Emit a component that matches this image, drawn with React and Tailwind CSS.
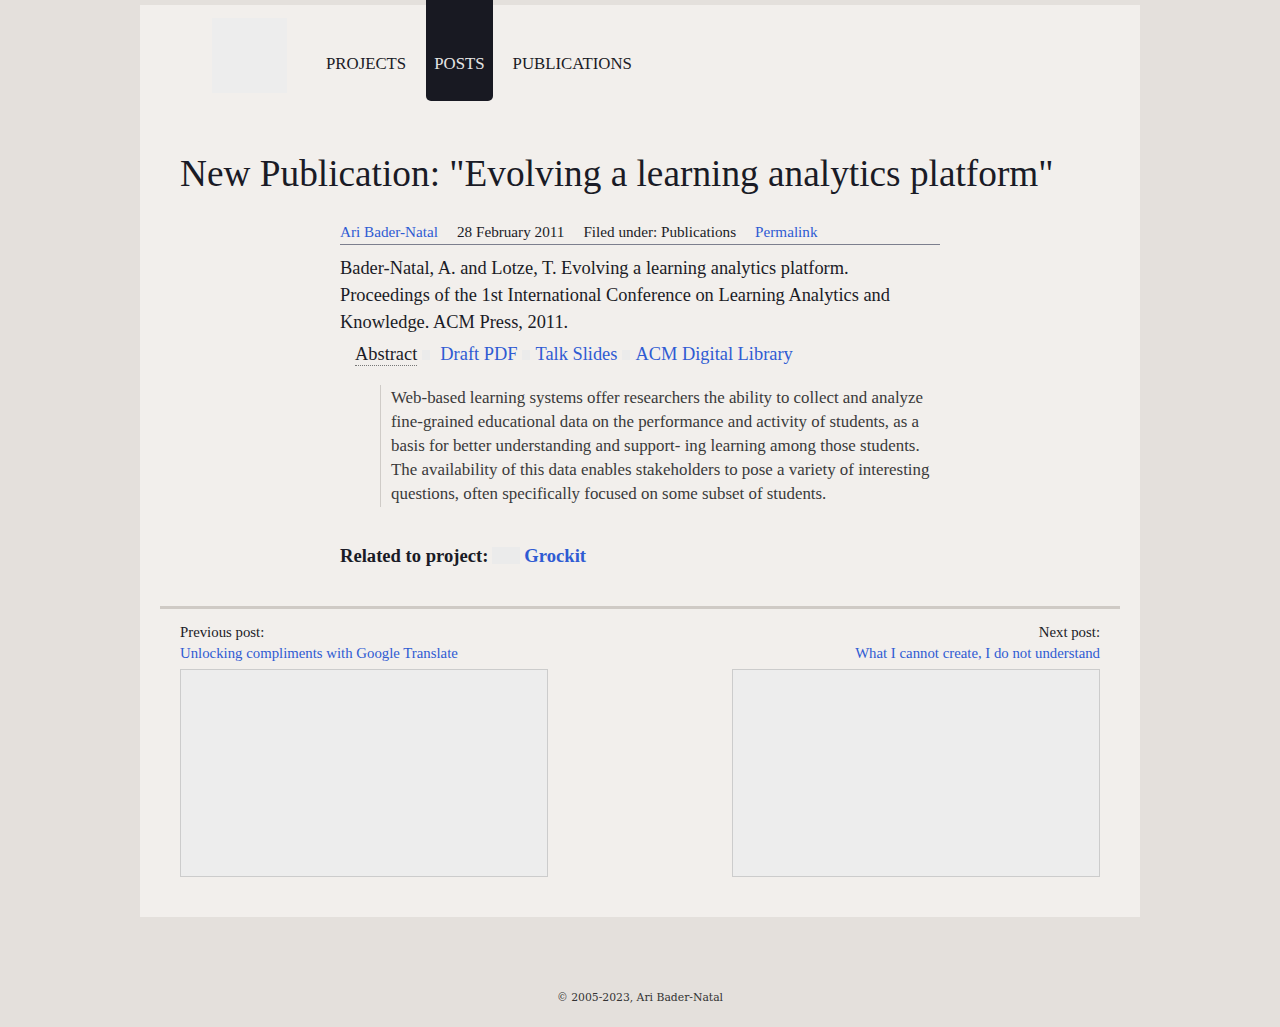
import React from 'react';

const serif = "font-['Liberation_Serif','Times_New_Roman',serif]";

const NavItem = ({ label, active }) => (
  <a
    href="#"
    className={
      'flex h-[101px] items-end px-2 pb-[25px] text-[16.8px] leading-6 ' +
      (active ? 'rounded-b-[5px] bg-[#181922] text-[#e6e6e6]' : 'text-[#1a1b26]')
    }
  >
    {label}
  </a>
);

const Dot = ({ className = '' }) => (
  <span className={'inline-block bg-[#ebebeb] align-middle ' + className}></span>
);

const App = () => {
  return (
    <div className={'min-h-[1027px] bg-[#e4e0dc] pt-[5px] ' + serif}>
      <div className="mx-auto flow-root w-[1000px] bg-[#f2efec] px-5 pb-10">
        {/* header */}
        <header className="-mt-[5px] flex items-start pl-[52px]">
          <div className="mt-[18px] h-[75px] w-[75px] bg-[#ededed]"></div>
          <nav className="ml-[31px] flex gap-[12px]">
            <NavItem label="PROJECTS" />
            <NavItem label="POSTS" active />
            <NavItem label="PUBLICATIONS" />
          </nav>
        </header>

        <h1 className="mt-[51px] ml-5 text-[37.3px] leading-[44px] text-[#1a1b26]">
          New Publication: "Evolving a learning analytics platform"
        </h1>

        <article className="ml-[180px] mt-[27px] w-[600px] text-[#1a1b26]">
          <div className="flex gap-[19px] border-b border-[#7d7f8e] pb-[3px] text-[15.2px] leading-[18px]">
            <a href="#" className="text-[#2f5bd3]">Ari Bader-Natal</a>
            <span>28 February 2011</span>
            <span>Filed under: Publications</span>
            <a href="#" className="text-[#2f5bd3]">Permalink</a>
          </div>

          <p className="mt-[10px] text-[18.4px] leading-[27px]">
            Bader-Natal, A. and Lotze, T. Evolving a learning analytics platform. Proceedings of the 1st
            International Conference on Learning Analytics and Knowledge. ACM Press, 2011.
          </p>

          <div className="mt-[5px] flex items-center pl-[15px] text-[18.4px] leading-[27px]">
            <span className="border-b border-dotted border-[#777] leading-[22px]">Abstract</span>
            <Dot className="ml-[5px] mr-[10px] h-[10px] w-[8px]" />
            <a href="#" className="text-[#2f5bd3]">Draft PDF</a>
            <Dot className="ml-[5px] mr-[5px] h-[10px] w-[8px]" />
            <a href="#" className="text-[#2f5bd3]">Talk Slides</a>
            <Dot className="ml-[5px] mr-[5px] h-[10px] w-[8px]" />
            <a href="#" className="text-[#2f5bd3]">ACM Digital Library</a>
          </div>

          <blockquote className="ml-10 mt-[17px] border-l border-[#cfcbc7] py-[1px] pl-[10px] text-[16.9px] leading-6 text-[#3a3a3a]">
            Web-based learning systems offer researchers the ability to collect and analyze fine-grained
            educational data on the performance and activity of students, as a basis for better understanding
            and support- ing learning among those students. The availability of this data enables stakeholders
            to pose a variety of interesting questions, often specifically focused on some subset of students.
          </blockquote>

          <div className="mt-[35px] flex items-center text-[18.6px] font-bold leading-[27px]">
            <span>Related to project:</span>
            <Dot className="ml-1 mr-1 h-[17px] w-[28px]" />
            <a href="#" className="text-[#2f5bd3]">Grockit</a>
          </div>
        </article>

        <div className="mt-[37px] border-t-[3px] border-[#cfcac5]"></div>

        <div className="mt-[13px] flex justify-between px-5 text-[14.8px] leading-[21px]">
          <div>
            <div className="text-[#1a1b26]">Previous post:</div>
            <a href="#" className="block text-[#2f5bd3]">Unlocking compliments with Google Translate</a>
            <div className="mt-[5px] h-[208px] w-[368px] border border-[#cccccc] bg-[#ededed]"></div>
          </div>
          <div className="text-right">
            <div className="text-[#1a1b26]">Next post:</div>
            <a href="#" className="block text-[#2f5bd3]">What I cannot create, I do not understand</a>
            <div className="mt-[5px] h-[208px] w-[368px] border border-[#cccccc] bg-[#ededed]"></div>
          </div>
        </div>
      </div>

      <footer className="pt-[73px] pb-5 text-center font-['DejaVu_Serif',serif] text-[10.8px] leading-4 text-[#333]">
        © 2005-2023, Ari Bader-Natal
      </footer>
    </div>
  );
};

export default App;
